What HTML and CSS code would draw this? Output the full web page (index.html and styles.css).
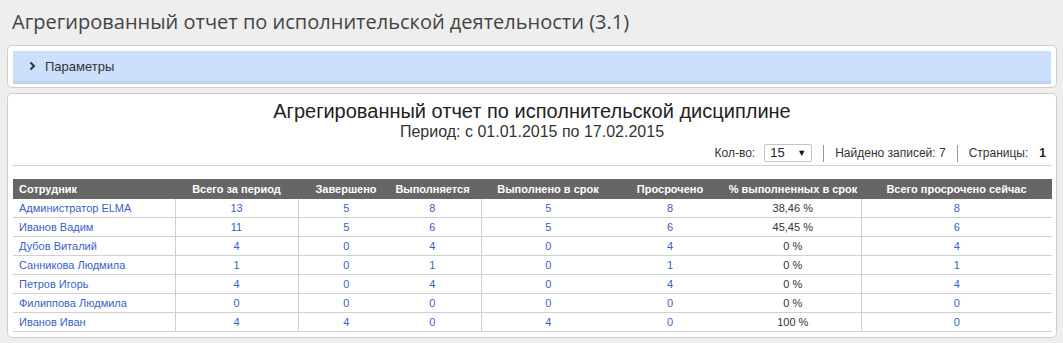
FILE: index.html
```html
<!DOCTYPE html>
<html lang="ru">
<head>
<meta charset="utf-8">
<link rel="stylesheet" href="styles.css">
</head>
<body>
<h1 class="page-title">Агрегированный отчет по исполнительской деятельности (3.1)</h1>
<div class="panel params">
  <div class="params-bar">
    <svg class="chev" width="7" height="10" viewBox="0 0 7 10"><path d="M1.5 1.5 L5 5 L1.5 8.5" fill="none" stroke="#333" stroke-width="2"/></svg>
    <span>Параметры</span>
  </div>
</div>
<div class="panel report">
  <div class="report-title">Агрегированный отчет по исполнительской дисциплине</div>
  <div class="report-period">Период: с 01.01.2015 по 17.02.2015</div>
  <div class="controls">
    <span class="lbl">Кол-во:</span>
    <div class="select"><span>15</span><span class="arrow">▼</span></div>
    <span class="sep"></span>
    <span>Найдено записей: 7</span>
    <span class="sep"></span>
    <span>Страницы:</span>
    <b class="page">1</b>
  </div>
  <table class="grid">
    <colgroup>
      <col class="c1"><col class="c2"><col class="c3"><col class="c4"><col class="c5"><col class="c6"><col class="c7"><col class="c8">
    </colgroup>
    <thead>
      <tr>
        <th class="left">Сотрудник</th>
        <th>Всего за период</th>
        <th>Завершено</th>
        <th class="shift">Выполняется</th>
        <th>Выполнено в срок</th>
        <th>Просрочено</th>
        <th>% выполненных в срок</th>
        <th>Всего просрочено сейчас</th>
      </tr>
    </thead>
    <tbody>
      <tr><td class="left"><a>Администратор ELMA</a></td><td class="vl"><a>13</a></td><td class="vl"><a>5</a></td><td class="shift"><a>8</a></td><td class="vl"><a>5</a></td><td><a>8</a></td><td>38,46 %</td><td class="vl"><a>8</a></td></tr>
      <tr><td class="left"><a>Иванов Вадим</a></td><td class="vl"><a>11</a></td><td class="vl"><a>5</a></td><td class="shift"><a>6</a></td><td class="vl"><a>5</a></td><td><a>6</a></td><td>45,45 %</td><td class="vl"><a>6</a></td></tr>
      <tr><td class="left"><a>Дубов Виталий</a></td><td class="vl"><a>4</a></td><td class="vl"><a>0</a></td><td class="shift"><a>4</a></td><td class="vl"><a>0</a></td><td><a>4</a></td><td>0 %</td><td class="vl"><a>4</a></td></tr>
      <tr><td class="left"><a>Санникова Людмила</a></td><td class="vl"><a>1</a></td><td class="vl"><a>0</a></td><td class="shift"><a>1</a></td><td class="vl"><a>0</a></td><td><a>1</a></td><td>0 %</td><td class="vl"><a>1</a></td></tr>
      <tr><td class="left"><a>Петров Игорь</a></td><td class="vl"><a>4</a></td><td class="vl"><a>0</a></td><td class="shift"><a>4</a></td><td class="vl"><a>0</a></td><td><a>4</a></td><td>0 %</td><td class="vl"><a>4</a></td></tr>
      <tr><td class="left"><a>Филиппова Людмила</a></td><td class="vl"><a>0</a></td><td class="vl"><a>0</a></td><td class="shift"><a>0</a></td><td class="vl"><a>0</a></td><td><a>0</a></td><td>0 %</td><td class="vl"><a>0</a></td></tr>
      <tr><td class="left"><a>Иванов Иван</a></td><td class="vl"><a>4</a></td><td class="vl"><a>4</a></td><td class="shift"><a>0</a></td><td class="vl"><a>4</a></td><td><a>0</a></td><td>100 %</td><td class="vl"><a>0</a></td></tr>
    </tbody>
  </table>
</div>
</body>
</html>
```
FILE: styles.css
```css
html, body {
  margin: 0;
  padding: 0;
  background: #eeeeee;
  font-family: "Liberation Sans", Arial, sans-serif;
  color: #333;
}
.page-title {
  margin: 0;
  padding: 8px 12px 0;
  font-family: "Open Sans", "Liberation Sans", sans-serif;
  font-weight: 400;
  font-size: 20px;
  line-height: 28px;
  color: #444;
}
.panel {
  margin: 0 6px 0 7px;
  background: #fff;
  border: 1px solid #cfcfcf;
  border-radius: 5px;
  padding: 5px;
}
.params {
  margin-top: 9px;
  padding-bottom: 3px;
}
.params-bar {
  display: flex;
  align-items: center;
  gap: 9px;
  height: 30px;
  padding-left: 16px;
  background: #cce0fb;
  border-bottom: 3px solid #bcd2ee;
  font-size: 13px;
  color: #333;
}
.chev { display: block; }
.report {
  margin-top: 5px;
  padding-top: 6px;
}
.report-title {
  text-align: center;
  font-size: 20px;
  line-height: 23px;
  color: #222;
}
.report-period {
  text-align: center;
  font-size: 16px;
  line-height: 18px;
  color: #333;
}
.controls {
  display: flex;
  justify-content: flex-end;
  align-items: center;
  gap: 11px;
  margin-top: 3px;
  padding: 0 5px 3px 0;
  border-bottom: 1px solid #d0d0d0;
  font-size: 12px;
  line-height: 18px;
  color: #333;
}
.controls .lbl { margin-right: -2px; }
.select {
  display: flex;
  justify-content: space-between;
  align-items: center;
  box-sizing: border-box;
  width: 48px;
  height: 18px;
  padding: 0 5px 0 5px;
  border: 1px solid #c4c4c4;
  border-radius: 2px;
  font-size: 13px;
  color: #222;
}
.select .arrow { font-size: 9px; color: #111; }
.sep {
  width: 1px;
  height: 17px;
  background: #999;
}
.page { font-weight: bold; color: #222; }
.grid {
  width: 100%;
  margin-top: 13px;
  border-collapse: collapse;
  table-layout: fixed;
  font-size: 11px;
}
.c1 { width: 162px; }
.c2 { width: 123px; }
.c3 { width: 96px; }
.c4 { width: 87px; }
.c5 { width: 134px; }
.c6 { width: 110px; }
.c7 { width: 136px; }
.c8 { width: 191px; }
.grid th {
  background: #666;
  color: #fff;
  font-weight: bold;
  height: 20px;
  padding: 0;
  text-align: center;
}
.grid td {
  height: 18px;
  padding: 0;
  text-align: center;
  border-bottom: 1px solid #d0d0d0;
  color: #333;
}
.grid .left { text-align: left; padding-left: 6px; }
.grid .shift { padding-right: 10px; }
.grid td.vl { border-left: 1px solid #d0d0d0; }
.grid a { color: #3b5fc9; text-decoration: none; }
```
